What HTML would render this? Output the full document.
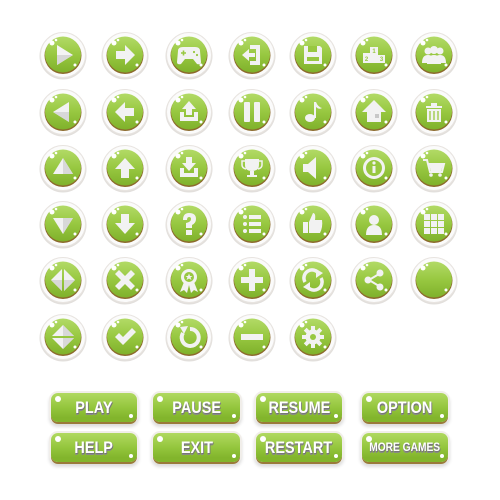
<!DOCTYPE html>
<html><head><meta charset="utf-8"><style>
html,body{margin:0;padding:0;background:#fff;width:500px;height:500px;overflow:hidden}
svg{position:absolute;left:0;top:0}
.b{position:absolute;height:29px;border-radius:7px;background:linear-gradient(#b0d960 0%,#94c63d 50%,#82b52c 85%);box-shadow:0 2px 0 #9a7a3a,0 0 0 2px #f1eeea,0 3px 3px 2px #ddd;font-family:"Liberation Sans",sans-serif;font-weight:bold;color:#fff;text-align:center;line-height:29px;font-size:17px;text-shadow:1px 1px 0 #777,0 2px 0 #888}
.b span{display:inline-block;transform:scaleX(0.85)}
.b::before{content:"";position:absolute;left:4px;top:3px;width:6px;height:6px;border-radius:50%;background:#fff}
.b::after{content:"";position:absolute;right:4px;bottom:4px;width:4px;height:4px;border-radius:50%;background:#fff}
</style></head><body>
<svg width="500" height="500" viewBox="0 0 500 500">
<defs>
<linearGradient id="g" x1="0" y1="0" x2="0" y2="1"><stop offset="0" stop-color="#b2da66"/><stop offset="0.5" stop-color="#98c841"/><stop offset="1" stop-color="#7fb12b"/></linearGradient>
<g id="c">
<circle r="23.5" cy="1" fill="#e2dfdc"/>
<circle r="22.5" fill="#fbfbfb" stroke="#e8e4e0" stroke-width="1"/>
<circle r="18.5" cy="0.5" fill="#8c6a2c"/>
<circle r="18" cy="-0.5" fill="url(#g)"/>
<circle cx="-11" cy="-12" r="2.5" fill="#fff"/>
<circle cx="-7" cy="-15" r="1.3" fill="#fff"/>
<circle cx="12" cy="10" r="1.5" fill="#fff"/>
</g>
</defs>
<g fill="#f2f2f2" stroke="none">
<g transform="translate(63,55)"><use href="#c"/><path d="M-6-10L10 0-6 10Z" fill="#f4f4f4"/><path d="M-6 0L10 0-6 10Z" fill="#d8d8d8"/></g>
<g transform="translate(125,55)"><use href="#c"/><path d="M-9-4H0V-10L10 0 0 10V4H-9Z"/></g>
<g transform="translate(189,55)"><use href="#c"/><path d="M-11-4Q-11-8-6-8H6Q11-8 11-4L12 7Q12 10 8 9L4 4H-4L-8 9Q-12 10-12 7Z"/><path d="M-8-2h5M-5.5-4.5v5" stroke="#98c841" stroke-width="1.6"/><circle cx="5" cy="-3" r="1.1" fill="#98c841"/><circle cx="8" cy="0" r="1.1" fill="#98c841"/></g>
<g transform="translate(252,55)"><use href="#c"/><path d="M-2-10H8V10H-2V6H4V-6H-2Z"/><path d="M-10 0L-3-6V-2H3V2H-3V6Z"/></g>
<g transform="translate(313,55)"><use href="#c"/><path d="M-9-9H7L9-7V9H-9Z"/><rect x="-5" y="-9" width="9" height="6" fill="#98c841"/><rect x="-6" y="2" width="12" height="4" fill="#98c841"/></g>
<g transform="translate(374,55)"><use href="#c"/><path d="M-4-8H4V8H-4ZM-11-2H-4V8H-11ZM4 0H11V8H4Z"/><text x="0" y="-2" font-size="6" fill="#98c841" text-anchor="middle" font-family="Liberation Sans" font-weight="bold">1</text><text x="-7.5" y="6" font-size="6" fill="#98c841" text-anchor="middle" font-family="Liberation Sans" font-weight="bold">2</text><text x="7.5" y="6" font-size="6" fill="#98c841" text-anchor="middle" font-family="Liberation Sans" font-weight="bold">3</text></g>
<g transform="translate(434,55)"><use href="#c"/><circle cx="-6" cy="-4" r="3.5"/><circle cx="6" cy="-4" r="3.5"/><circle cx="0" cy="-5" r="4"/><path d="M-12 8Q-12 0-6 0Q0 0 0 8ZM0 8Q0 0 6 0Q12 0 12 8ZM-7 9Q-7 0 0 0Q7 0 7 9Z"/></g>
<g transform="translate(63,112)"><use href="#c"/><path d="M6-10L-10 0 6 10Z"/><path d="M-10 0L6 0 6 10Z" fill="#d8d8d8"/></g>
<g transform="translate(125,112)"><use href="#c"/><path d="M9-4H0V-10L-10 0 0 10V4H9Z"/></g>
<g transform="translate(189,112)"><use href="#c"/><path d="M-9 0V9H9V0H5V5H-5V0Z"/><path d="M0-11L7-3H3V3H-3V-3H-7Z"/></g>
<g transform="translate(252,112)"><use href="#c"/><rect x="-8" y="-10" width="6" height="20" rx="1"/><rect x="2" y="-10" width="6" height="20" rx="1"/></g>
<g transform="translate(313,112)"><use href="#c"/><ellipse cx="-3" cy="6" rx="5" ry="4"/><path d="M1-10H3Q5-5 9-4 6-2 3-5V6H1Z"/></g>
<g transform="translate(374,112)"><use href="#c"/><path d="M0-12L12 0H7V10H-7V0H-12Z"/><rect x="1" y="2" width="4" height="4" fill="#c8c8c8"/></g>
<g transform="translate(434,112)"><use href="#c"/><path d="M-8-6H8V-4H-8ZM-3-9H3V-6H-3Z"/><path d="M-7-3H7V10H-7Z"/><path d="M-4-1v9M0-1v9M4-1v9" stroke="#98c841" stroke-width="1.3"/></g>
<g transform="translate(63,168)"><use href="#c"/><path d="M0-10L10 6H-10Z"/><path d="M0 6L10 6 0-10Z" fill="#d8d8d8"/></g>
<g transform="translate(125,168)"><use href="#c"/><path d="M-4 10V1H-10L0-10 10 1H4V10Z"/></g>
<g transform="translate(189,168)"><use href="#c"/><path d="M-9 0V9H9V0H5V5H-5V0Z"/><path d="M0 3L7-5H3V-11H-3V-5H-7Z"/></g>
<g transform="translate(252,168)"><use href="#c"/><path d="M-7-9H7V-3Q7 3 0 3Q-7 3-7-3Z"/><path d="M-2 3H2V7H5V9H-5V7H-2Z"/><path d="M-7-7H-10V-3Q-10 0-6 1M7-7H10V-3Q10 0 6 1" stroke="#f2f2f2" stroke-width="1.5" fill="none"/></g>
<g transform="translate(313,168)"><use href="#c"/><path d="M-10-4H-5L3-11V11L-5 4H-10Z"/></g>
<g transform="translate(374,168)"><use href="#c"/><circle r="11"/><circle r="8" fill="#98c841"/><rect x="-1.5" y="-2" width="3" height="7" fill="#f2f2f2"/><circle cy="-5" r="1.6" fill="#f2f2f2"/></g>
<g transform="translate(434,168)"><use href="#c"/><path d="M-11-8H-7L-4 4H8L10-4H-6" stroke="#f2f2f2" stroke-width="2" fill="none"/><path d="M-5-3H9L7 3H-3Z"/><circle cx="-3" cy="7" r="1.8"/><circle cx="6" cy="7" r="1.8"/></g>
<g transform="translate(63,224)"><use href="#c"/><path d="M0 10L10-6H-10Z"/><path d="M0 10L10-6 0-6Z" fill="#d8d8d8"/></g>
<g transform="translate(125,224)"><use href="#c"/><path d="M-4-10V-1H-10L0 10 10-1H4V-10Z"/></g>
<g transform="translate(189,224)"><use href="#c"/><path d="M-6-4Q-6-11 0-11Q7-11 7-5Q7-1 3 1V4H-3V-1Q2-2 2-5Q2-7 0-7Q-2-7-2-4Z"/><rect x="-3" y="6" width="6" height="5"/></g>
<g transform="translate(252,224)"><use href="#c"/><circle cx="-7" cy="-7" r="2"/><circle cx="-7" cy="0" r="2"/><circle cx="-7" cy="7" r="2"/><rect x="-3" y="-9" width="12" height="4"/><rect x="-3" y="-2" width="12" height="4"/><rect x="-3" y="5" width="12" height="4"/></g>
<g transform="translate(313,224)"><use href="#c"/><rect x="-10" y="-2" width="5" height="11"/><path d="M-4-2L0-11Q3-11 2-4H9Q10 3 7 9H-4Z"/></g>
<g transform="translate(374,224)"><use href="#c"/><circle cy="-4" r="5"/><path d="M-8 11Q-8 1 0 1Q8 1 8 11Z"/></g>
<g transform="translate(434,224)"><use href="#c"/><path d="M-10-10h6v6h-6zM-3-10h6v6h-6zM4-10h6v6h-6zM-10-3h6v6h-6zM-3-3h6v6h-6zM4-3h6v6h-6zM-10 4h6v6h-6zM-3 4h6v6h-6zM4 4h6v6h-6z"/></g>
<g transform="translate(63,280)"><use href="#c"/><path d="M-1-11L-12 0-1 11ZM1-11L12 0 1 11Z"/><path d="M-12 0L-1 0-1 11ZM12 0L1 0 1 11Z" fill="#d8d8d8"/></g>
<g transform="translate(125,280)"><use href="#c"/><path d="M-10-6L-6-10 0-4 6-10 10-6 4 0 10 6 6 10 0 4-6 10-10 6-4 0Z"/></g>
<g transform="translate(189,280)"><use href="#c"/><path d="M-5 2L-9 12-5 10-2 13 0 5ZM5 2L9 12 5 10 2 13 0 5Z"/><circle cy="-3" r="8"/><circle cy="-3" r="5" fill="#98c841"/><path d="M0-6.5L1-4 3.5-4 1.5-2.5 2.5 0 0-1.5-2.5 0-1.5-2.5-3.5-4-1-4Z"/></g>
<g transform="translate(252,280)"><use href="#c"/><path d="M-3-11H3V-3H11V3H3V11H-3V3H-11V-3H-3Z"/></g>
<g transform="translate(313,280)"><use href="#c"/><path d="M-8 2A8 8 0 0 1 6-6" stroke="#f2f2f2" stroke-width="3.5" fill="none"/><path d="M3-11L10-7 3-2Z"/><path d="M8-2A8 8 0 0 1-6 6" stroke="#f2f2f2" stroke-width="3.5" fill="none"/><path d="M-3 11L-10 7-3 2Z"/></g>
<g transform="translate(374,280)"><use href="#c"/><path d="M5-6L-5 0 5 6" stroke="#f2f2f2" stroke-width="2" fill="none"/><circle cx="6" cy="-7" r="3.5"/><circle cx="-6" cy="0" r="3.5"/><circle cx="6" cy="7" r="3.5"/></g>
<g transform="translate(434,280)"><use href="#c"/></g>
<g transform="translate(63,337)"><use href="#c"/><path d="M0-12L-11-1H11ZM0 12L-11 1H11Z"/><path d="M0-12L11-1 0-1ZM0 12L11 1 0 1Z" fill="#d8d8d8"/></g>
<g transform="translate(125,337)"><use href="#c"/><path d="M-10 0L-6-4-2 0 7-9 11-5-2 8Z"/></g>
<g transform="translate(189,337)"><use href="#c"/><path d="M-6-4A8.5 8.5 0 1 0 1-8" stroke="#f2f2f2" stroke-width="4" fill="none"/><path d="M-9-10L-1-11-5-3Z"/></g>
<g transform="translate(252,337)"><use href="#c"/><rect x="-11" y="-3" width="22" height="6"/></g>
<g transform="translate(313,337)"><use href="#c"/><path d="M-2-11h4v4h-4zM-2 7h4v4h-4zM-11-2h4v4h-4zM7-2h4v4h-4z"/><path d="M-2-11h4v4h-4zM-2 7h4v4h-4zM-11-2h4v4h-4zM7-2h4v4h-4z" transform="rotate(45)"/><circle r="7.5"/><circle r="3" fill="#98c841"/></g>
</g>
</svg>
<div class="b" style="left:51px;top:393px;width:86px"><span>PLAY</span></div>
<div class="b" style="left:153px;top:393px;width:87px"><span>PAUSE</span></div>
<div class="b" style="left:256px;top:393px;width:86px"><span>RESUME</span></div>
<div class="b" style="left:362px;top:393px;width:86px"><span>OPTION</span></div>
<div class="b" style="left:51px;top:433px;width:86px"><span>HELP</span></div>
<div class="b" style="left:153px;top:433px;width:87px"><span>EXIT</span></div>
<div class="b" style="left:256px;top:433px;width:86px"><span>RESTART</span></div>
<div class="b" style="left:362px;top:433px;width:86px;font-size:12px"><span>MORE GAMES</span></div>
</body></html>
